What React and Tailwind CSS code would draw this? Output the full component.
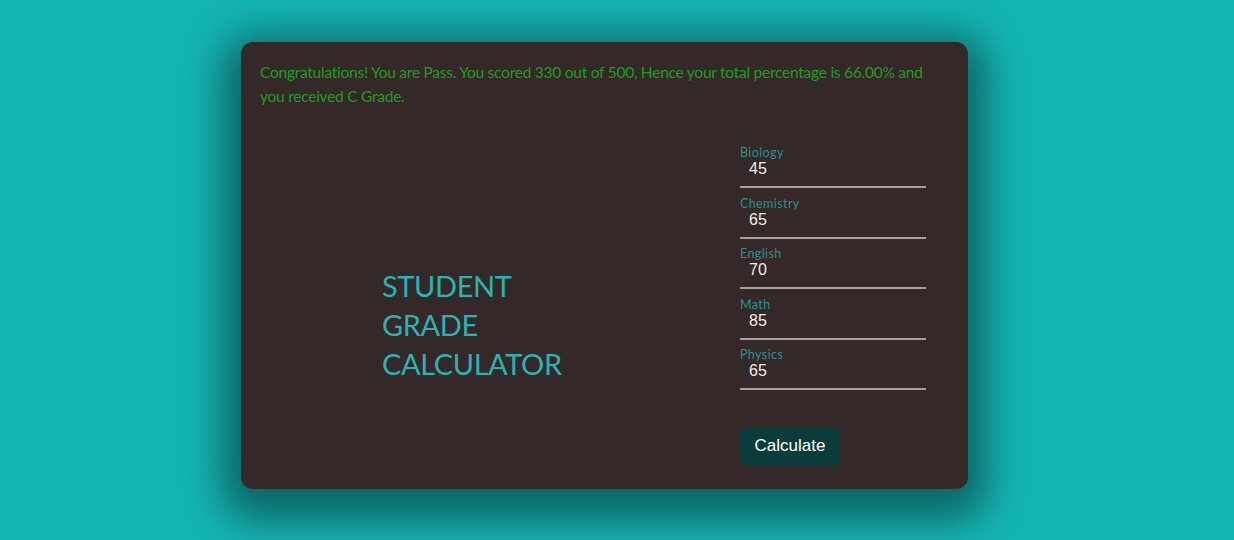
import React from 'react';

const subjects = [
  { name: 'Biology', value: '45' },
  { name: 'Chemistry', value: '65' },
  { name: 'English', value: '70' },
  { name: 'Math', value: '85' },
  { name: 'Physics', value: '65' },
];

export default function App() {
  return (
    <div className="min-h-[540px] w-full bg-[#15b4b4] pt-[42px] pl-[241px] font-['Lato',sans-serif]">
      <div className="w-[727px] h-[447px] rounded-xl bg-[#352828] shadow-[0_12px_40px_18px_rgba(0,0,0,0.45)] px-[19px] pt-[18px] flex flex-col">
        <p className="text-[15.5px] leading-[24px] tracking-[-0.25px] text-[#1e9e1e]">
          Congratulations! You are Pass. You scored 330 out of 500, Hence your total percentage is 66.00% and you received C Grade.
        </p>

        <div className="flex flex-1 mt-[38px]">
          <div className="flex-1 flex items-center pl-[122px] pt-[14px]">
            <h1 className="text-[29px] leading-[39px] text-[#2bb3b3] tracking-[-0.4px]">
              STUDENT
              <br />
              GRADE
              <br />
              CALCULATOR
            </h1>
          </div>

          <div className="w-[186px] mr-[23px] flex flex-col">
            {subjects.map((s) => (
              <div key={s.name} className="mb-[8.5px]">
                <label className="block text-[12.5px] leading-[14px] tracking-[0.4px] text-[#2a9090]">
                  {s.name}
                </label>
                <div className="pl-[9px] pb-[8px] border-b-2 border-[#aaa0a0] text-[16px] leading-[18px] text-[#f2ede4] font-['Liberation_Sans',sans-serif]">
                  {s.value}
                </div>
              </div>
            ))}

            <button className="mt-[28px] w-[100px] h-[38px] rounded-lg bg-[#0a3c3c] text-white text-[17px] font-['Liberation_Sans',sans-serif]">
              Calculate
            </button>
          </div>
        </div>
      </div>
    </div>
  );
}
